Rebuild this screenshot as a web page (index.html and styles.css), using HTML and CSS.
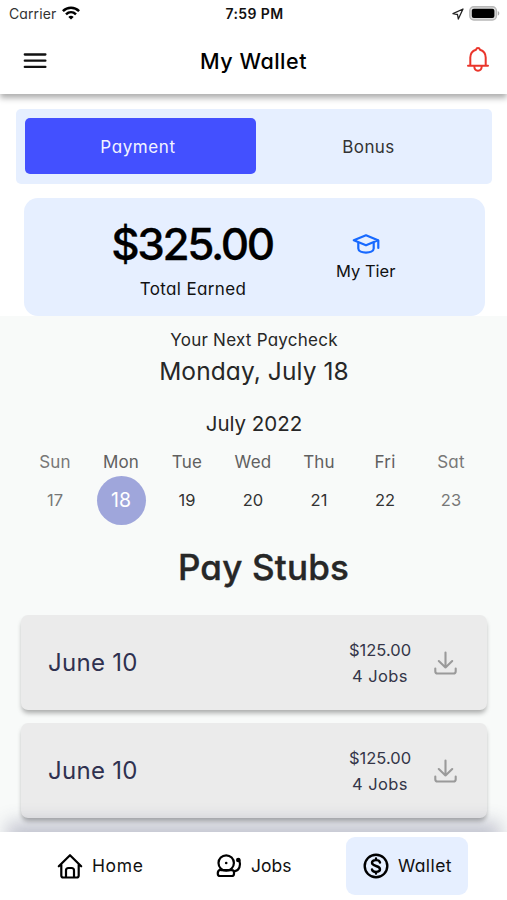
FILE: index.html
```html
<!DOCTYPE html>
<html lang="en">
<head>
<meta charset="utf-8">
<title>My Wallet</title>
<link rel="stylesheet" href="styles.css">
</head>
<body>
<div class="app">
  <header class="header">
    <div class="status">
      <div class="status-left">
        <span class="carrier">Carrier</span>
        <svg class="wifi" viewBox="0 0 18 14" fill="none" stroke="#000" stroke-width="2.5"><path d="M.9 5.2c4.6-4.5 11.6-4.5 16.2 0M4 8.4c2.9-2.8 7.100-2.800 10 0"/><path d="M9 13.600 6.300 10.900c1.600-1.400 3.800-1.400 5.400 0z" fill="#000" stroke="none"/></svg>
      </div>
      <span class="clock">7:59 PM</span>
      <div class="status-right">
        <svg class="locate" viewBox="0 0 12 12" fill="none" stroke="#222" stroke-width="1.300" stroke-linejoin="round"><path d="M11 1 1 5.700l4.500.8.8 4.500z"/></svg>
        <svg class="battery" viewBox="0 0 31 15"><rect x=".8" y=".8" width="26.600" height="13.200" rx="4" fill="#ddd" stroke="#b8b8b8" stroke-width="1.400"/><rect x="2.800" y="2.700" width="22.600" height="9.400" rx="2" fill="#000"/><path d="M28.800 5v4.600c2-.8 2-3.800 0-4.600z" fill="#aaa"/></svg>
      </div>
    </div>
    <div class="titlebar">
      <svg class="menu" viewBox="0 0 24 18" fill="none" stroke="#111" stroke-width="2.300" stroke-linecap="round"><path d="M1.800 2.500h20.600M1.800 8.700h20.600M1.800 14.900h20.600"/></svg>
      <h1 class="title">My Wallet</h1>
      <svg class="bell" viewBox="0 0 24 26" fill="none" stroke="#ea352b" stroke-width="2" stroke-linecap="round" stroke-linejoin="round"><path d="M2 19.800h20M4.300 19.500V11.500C4.300 7.500 6.800 4.800 10 3.700 10.600 1.500 13.400 1.500 14 3.700 17.200 4.800 19.700 7.500 19.700 11.500v8M8.300 20.500c.3 5.500 7.100 5.500 7.400 0"/></svg>
    </div>
  </header>

  <section class="summary">
    <div class="tabs">
      <div class="tab tab-active">Payment</div>
      <div class="tab tab-rest">Bonus</div>
    </div>
    <div class="earned">
      <div class="total">
        <div class="amount">$325.00</div>
        <div class="label total-label">Total Earned</div>
      </div>
      <div class="tier">
        <svg class="cap" viewBox="0 0 28 20" fill="none" stroke="#1769ff" stroke-width="2.200" stroke-linejoin="round" stroke-linecap="round"><path d="M14 1.300 1.800 6.300 14 11.300l12-5z"/><path d="M6.300 9v5.500c0 5.500 15.400 5.500 15.400 0V9M26.300 6.500v7.500"/></svg>
        <div class="label tier-label">My Tier</div>
      </div>
    </div>
  </section>

  <main class="content">
    <div class="next-label">Your Next Paycheck</div>
    <div class="next-date">Monday, July 18</div>
    <div class="month">July 2022</div>
    <div class="week">
      <span class="day dim">Sun</span><span class="day">Mon</span><span class="day">Tue</span><span class="day">Wed</span><span class="day">Thu</span><span class="day">Fri</span><span class="day dim">Sat</span>
      <span class="date dim">17</span><span class="date picked">18</span><span class="date">19</span><span class="date">20</span><span class="date">21</span><span class="date">22</span><span class="date dim">23</span>
    </div>
    <h2 class="heading">Pay Stubs</h2>
    <div class="stubs">
      <div class="stub">
        <span class="stub-date">June 10</span>
        <div class="stub-info"><span class="stub-pay">$125.00</span><span class="stub-jobs">4 Jobs</span></div>
        <svg class="download" viewBox="0 0 23 24" fill="none" stroke="#9a9a9a" stroke-width="2.100" stroke-linecap="round" stroke-linejoin="round"><path d="M11.500 1.500v15M4.800 10l6.700 6.500 6.700-6.500M1.300 17.500v2.700q0 2.300 2.300 2.300h15.800q2.300 0 2.300-2.300v-2.700"/></svg>
      </div>
      <div class="stub">
        <span class="stub-date">June 10</span>
        <div class="stub-info"><span class="stub-pay">$125.00</span><span class="stub-jobs">4 Jobs</span></div>
        <svg class="download" viewBox="0 0 23 24" fill="none" stroke="#9a9a9a" stroke-width="2.100" stroke-linecap="round" stroke-linejoin="round"><path d="M11.500 1.500v15M4.800 10l6.700 6.500 6.700-6.500M1.300 17.500v2.700q0 2.300 2.300 2.300h15.800q2.300 0 2.300-2.300v-2.700"/></svg>
      </div>
    </div>
  </main>

  <nav class="nav">
    <div class="nav-item home">
      <svg class="nav-icon" viewBox="0 0 26 26" fill="none" stroke="#000" stroke-width="2.200" stroke-linecap="round" stroke-linejoin="round"><path d="M1.800 13.300 13 2.200l11.200 11.100M4.300 11.500V22.500q0 2 2 2h13.400q2 0 2-2V11.500M9 24V17.500q0-2.500 2.500-2.500h3q2.500 0 2.500 2.500v6.500"/></svg>
      <span>Home</span>
    </div>
    <div class="nav-item jobs">
      <svg class="nav-icon" viewBox="0 0 26 26" fill="none" stroke="#000" stroke-width="2.200" stroke-linecap="round" stroke-linejoin="round"><circle cx="10.200" cy="10" r="7.700"/><circle cx="10.200" cy="10" r="1.300" fill="#000" stroke="none"/><path d="M4.600 16.200C2.500 17.200 1.800 18.500 1.800 20v.7q0 2.300 2.300 2.300h11.600q2.300 0 2.300-2.300v-1.200q0-2.300-2.300-2.300H5M18.500 18.300c5-.8 6.500-6 4.800-11.300"/><circle cx="22.300" cy="7" r="2.300" fill="#000" stroke="none"/></svg>
      <span>Jobs</span>
    </div>
    <div class="nav-item wallet">
      <svg class="nav-icon" viewBox="0 0 26 26" fill="none" stroke="#000" stroke-width="2.400" stroke-linecap="round" stroke-linejoin="round"><circle cx="13" cy="13" r="11.300"/><path d="M17 9.500c-.6-3.200-8-3.200-8 .3 0 4.200 8 2.200 8 6.400 0 3.500-7.400 3.500-8 .3M13 5.500v1.500M13 19v1.500"/></svg>
      <span>Wallet</span>
    </div>
  </nav>
</div>
</body>
</html>
```
FILE: styles.css
```css
* { box-sizing: border-box; }
body {
  margin: 0;
  background: #fff;
  font-family: Inter, "Open Sans", sans-serif;
  font-feature-settings: "cv11";
  font-size: 16.5px;
  color: #111;
}
svg { display: block; flex: none; }
h1, h2 { margin: 0; }
.app {
  width: 507px;
  height: 900px;
  overflow: hidden;
  display: flex;
  flex-direction: column;
}
.header {
  height: 94px;
  flex: none;
  position: relative;
  z-index: 1;
  background: #fff;
  box-shadow: 0 4px 6px rgba(0, 0, 0, .32);
}
.status {
  height: 27px;
  display: grid;
  grid-template-columns: 1fr auto 1fr;
  align-items: center;
  padding: 0 7px 0 9px;
}
.status-left, .status-right { display: flex; align-items: center; }
.status-right { justify-content: flex-end; gap: 5px; }
.carrier { font-size: 14px; line-height: 27px; color: #333; letter-spacing: .1px; }
.wifi { width: 18px; height: 14px; margin-left: 6px; margin-top: -1px; }
.clock { font-size: 14px; font-weight: 600; letter-spacing: .4px; }
.locate { width: 12px; height: 12px; }
.battery { width: 31px; height: 15px; }
.titlebar {
  height: 65px;
  display: grid;
  grid-template-columns: 24px 1fr 24px;
  align-items: center;
  padding: 0 17px 0 23px;
}
.menu { width: 24px; height: 18px; margin-top: 2px; }
.title { font-size: 21.500px; line-height: 26px; font-weight: 500; text-align: center; letter-spacing: .5px; padding: 2px 6px 0 0; color: #000; }
.bell { width: 24px; height: 26px; margin-top: -1px; }
.summary { height: 222px; flex: none; padding: 15px 15px 0 16px; }
.tabs {
  height: 75px;
  padding: 9px;
  display: flex;
  background: #e6efff;
  border-radius: 5px;
}
.tab {
  height: 56px;
  line-height: 58px;
  border-radius: 5px;
  text-align: center;
  color: #333;
  font-size: 17px;
  letter-spacing: .4px;
}
.tab-active { width: 231px; flex: none; padding-right: 5px; background: #4350ff; color: #f2f4ff; letter-spacing: .6px; }
.tab-rest { flex: 1; padding-right: 2px; }
.earned {
  height: 118px;
  width: 461px;
  margin: 14px 0 0 8px;
  background: #e6efff;
  border-radius: 14px;
  display: flex;
}
.total { width: 312px; padding: 16px 0 0 26px; text-align: center; }
.amount { font-size: 44px; line-height: 61px; font-weight: 500; letter-spacing: -2.4px; padding-right: 2px; color: #000; -webkit-text-stroke: .3px #000; }
.label { line-height: 30px; }
.total-label { font-size: 17px; line-height: 29px; letter-spacing: .35px; }
.tier { display: flex; flex-direction: column; align-items: center; padding-top: 36px; }
.tier-label { margin-top: 2px; }
.cap { width: 28px; height: 20px; }
.content {
  height: 516px;
  flex: none;
  background: #f8faf9;
  color: #272727;
  text-align: center;
  padding: 9px 20px 0 21px;
}
.next-label { font-size: 17px; line-height: 30px; letter-spacing: .25px; }
.next-date { font-size: 24.500px; line-height: 32px; letter-spacing: .1px; }
.month { font-size: 20.500px; line-height: 30px; margin-top: 22px; }
.week {
  display: grid;
  grid-template-columns: repeat(7, 66px);
  grid-template-rows: 29px 48px;
  justify-items: center;
  align-items: center;
  margin-top: 8px;
  margin-left: 1px;
}
.day { color: #606060; font-size: 17px; letter-spacing: .2px; }
.date { color: #333; }
.dim { color: #777; }
.date.picked {
  width: 49px;
  height: 49px;
  line-height: 49px;
  border-radius: 50%;
  background: #9fa6db;
  color: #fff;
  font-size: 19.500px;
}
.heading { font-size: 35px; line-height: 44px; font-weight: 500; margin-top: 21px; padding-left: 19px; color: #272727; letter-spacing: .2px; -webkit-text-stroke: .4px #272727; }
.stubs { display: flex; flex-direction: column; gap: 13px; margin-top: 26px; }
.stub {
  height: 95px;
  width: 466px;
  display: flex;
  align-items: center;
  padding: 0 30px 0 27px;
  background: #ebebeb;
  border-radius: 7px;
  box-shadow: 0 4px 5px -1px rgba(0, 0, 0, .32);
  color: #343648;
}
.stub-date { font-size: 24px; flex: 1; text-align: left; color: #2f3150; letter-spacing: .3px; }
.stub-info { width: 64px; display: flex; flex-direction: column; line-height: 26px; margin-right: 22px; }
.stub-jobs { letter-spacing: .4px; }
.download { width: 23px; height: 24px; }
.nav {
  height: 68px;
  flex: none;
  position: relative;
  display: grid;
  grid-template-columns: 179px 159px 122px;
  padding: 5px 0 0 8px;
  background: #fff;
  box-shadow: 0 -17px 18px -7px rgba(60, 62, 105, .28);
}
.nav-item { height: 58px; display: flex; align-items: center; gap: 9px; line-height: 60px; font-size: 17.500px; letter-spacing: .6px; }
.nav-icon { width: 26px; height: 26px; }
.home { padding-left: 49px; }
.jobs { padding-left: 29px; letter-spacing: 0; }
.wallet { background: #e6efff; border-radius: 9px; padding-left: 17px; letter-spacing: .4px; }
```
